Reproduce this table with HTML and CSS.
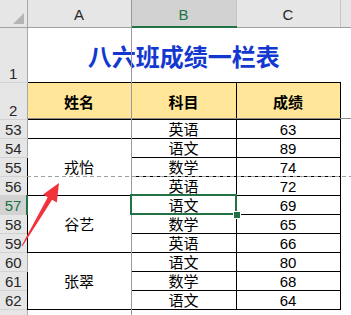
FILE: index.html
```html
<!DOCTYPE html>
<html lang="zh">
<head>
<meta charset="utf-8">
<link rel="stylesheet" href="styles.css">
</head>
<body>
<div class="sheet">
  <table class="grid">
    <colgroup>
      <col class="c-rh"><col class="c-a"><col class="c-b"><col class="c-c"><col class="c-d">
    </colgroup>
    <thead>
      <tr class="colhdr">
        <th class="corner"><span class="tri"></span></th>
        <th>A</th>
        <th class="sel">B</th>
        <th>C</th>
        <th class="last"></th>
      </tr>
    </thead>
    <tbody>
      <tr class="r-title"><th class="rh">1</th><td colspan="3" class="title">八六班成绩一栏表</td><td class="d"></td></tr>
      <tr class="r-head"><th class="rh">2</th><td class="hd">姓名</td><td class="hd">科目</td><td class="hd">成绩</td><td class="d"></td></tr>
      <tr class="r"><th class="rh">53</th><td></td><td>英语</td><td>63</td><td class="d"></td></tr>
      <tr class="r"><th class="rh">54</th><td rowspan="3">戎怡</td><td>语文</td><td>89</td><td class="d"></td></tr>
      <tr class="r"><th class="rh">55</th><td>数学</td><td>74</td><td class="d"></td></tr>
      <tr class="r"><th class="rh">56</th><td>英语</td><td>72</td><td class="d"></td></tr>
      <tr class="r"><th class="rh selrow">57</th><td rowspan="3">谷艺</td><td>语文</td><td>69</td><td class="d"></td></tr>
      <tr class="r"><th class="rh">58</th><td>数学</td><td>65</td><td class="d"></td></tr>
      <tr class="r"><th class="rh">59</th><td>英语</td><td>66</td><td class="d"></td></tr>
      <tr class="r"><th class="rh">60</th><td rowspan="3">张翠</td><td>语文</td><td>80</td><td class="d"></td></tr>
      <tr class="r"><th class="rh">61</th><td>数学</td><td>68</td><td class="d"></td></tr>
      <tr class="r"><th class="rh">62</th><td>语文</td><td>64</td><td class="d"></td></tr>
      <tr class="r"><th class="rh"></th><td class="d"></td><td class="d"></td><td class="d"></td><td class="d"></td></tr>
    </tbody>
  </table>

  <div class="freeze-h"></div>
  <div class="freeze-v"></div>
  <div class="pagebreak"></div>
  <div class="selection"><span class="handle"></span></div>

  <svg class="arrow" width="351" height="315" viewBox="0 0 351 315">
    <polygon points="22.4,246.3 52.1,199.8 56.8,202.5 59,183 43,194.5 47.7,197.2 21.6,245.7" fill="#f2333b"/>
  </svg>
</div>
</body>
</html>
```

FILE: styles.css
```css
html, body {
  margin: 0;
  padding: 0;
  background: #fff;
  overflow: hidden;
}
body {
  width: 351px;
  height: 315px;
  font-family: "Liberation Sans", "Noto Sans CJK SC", sans-serif;
  color: #000;
}
.sheet {
  position: relative;
  width: 351px;
  height: 315px;
  overflow: hidden;
}
.grid {
  border-collapse: collapse;
  table-layout: fixed;
  width: 400px;
  font-size: 15px;
  line-height: 17px;
}
.c-rh { width: 27px; }
.c-a { width: 104px; }
.c-b { width: 105px; }
.c-c { width: 104px; }
.c-d { width: 60px; }

.grid th, .grid td {
  padding: 0;
  text-align: center;
  font-weight: normal;
  white-space: nowrap;
  overflow: hidden;
}

/* column headers */
.colhdr { height: 27px; }
.colhdr th {
  background: #e6e6e6;
  color: #262626;
  border-right: 1px solid #c4c4c4;
  border-bottom: 1px solid #a0a0a0;
  vertical-align: middle;
  padding-top: 3px;
  font-size: 15px;
}
.colhdr th.sel {
  background: #d2d2d2;
  color: #217346;
  border-bottom: 2px solid #217346;
}
.colhdr th.corner {
  position: relative;
  border-right: 1px solid #a8a8a8;
}
.tri {
  position: absolute;
  right: 3px;
  bottom: 3px;
  width: 0;
  height: 0;
  border-left: 11px solid transparent;
  border-bottom: 11px solid #b4b4b4;
}

/* row headers */
.rh {
  background: #e6e6e6;
  color: #262626;
  border-right: 1px solid #a8a8a8;
  border-bottom: 1px solid #d2d2d2;
  vertical-align: bottom;
  font-size: 15px;
}
.rh.selrow {
  background: #d2d2d2;
  color: #217346;
  border-right: 2px solid #217346;
}

/* rows */
.r-title { height: 55px; }
.r-head { height: 37px; }
.r { height: 19px; }

.grid td {
  border: 1px solid #000;
  vertical-align: middle;
  padding-top: 1px;
}
.grid td.d {
  border: none;
  background: #fff;
}
.grid td.title {
  border: none;
  border-bottom: 1px solid #000;
  color: #1238d0;
  font-weight: bold;
  font-size: 24px;
  line-height: 26px;
  padding-top: 6px;
}
.grid td.hd {
  background: #ffe699;
  font-weight: bold;
  padding-top: 4px;
}

/* overlays */
.freeze-h {
  position: absolute;
  left: 27px;
  right: 0;
  top: 118px;
  height: 1px;
  background: #8c8c8c;
}
.freeze-v {
  position: absolute;
  left: 131px;
  top: 0;
  bottom: 0;
  width: 1px;
  background: #9a9a9a;
}
.pagebreak {
  position: absolute;
  left: 27px;
  right: 0;
  top: 176px;
  height: 1px;
  background: repeating-linear-gradient(to right, #a0a0a0 0 4px, transparent 4px 7px);
}
.selection {
  position: absolute;
  left: 130px;
  top: 194px;
  width: 103px;
  height: 17px;
  border: 2px solid #217346;
}
.handle {
  position: absolute;
  right: -6px;
  bottom: -6px;
  width: 6px;
  height: 6px;
  background: #217346;
  border: 1px solid #fff;
}
.arrow {
  position: absolute;
  left: 0;
  top: 0;
  pointer-events: none;
}
```
